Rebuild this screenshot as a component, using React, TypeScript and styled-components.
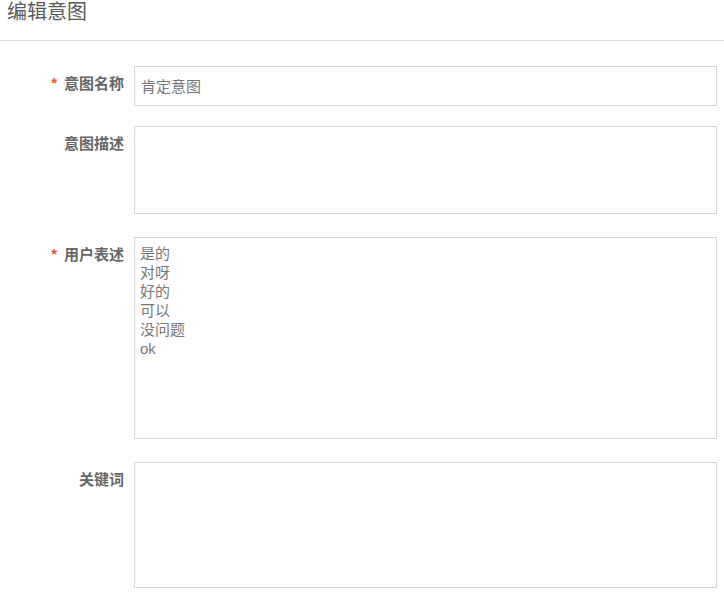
import React from "react";
import styled, { createGlobalStyle } from "styled-components";

const Global = createGlobalStyle`
  html, body { margin: 0; padding: 0; background: #fff; }
  body { font-family: "Liberation Sans", "Noto Sans CJK SC", sans-serif; }
  * { box-sizing: border-box; }
`;

const Page = styled.div`
  width: 724px;
  min-height: 603px;
  background: #fff;
`;

const Header = styled.header`
  height: 41px;
  border-bottom: 1px solid #dddddd;
  padding-left: 7px;
`;

const Title = styled.h1`
  margin: 0;
  font-size: 20px;
  line-height: 25px;
  font-weight: normal;
  color: #5a5a5a;
`;

const Form = styled.form`
  padding: 25px 7px 0 0;
  display: flex;
  flex-direction: column;
`;

const Row = styled.div<{ $gap: number }>`
  display: grid;
  grid-template-columns: 124px 583px;
  column-gap: 10px;
  margin-bottom: ${(p) => p.$gap}px;
`;

const Label = styled.label`
  display: flex;
  justify-content: flex-end;
  align-items: center;
  height: 20px;
  margin-top: 6px;
  font-size: 15px;
  font-weight: bold;
  color: #666;
  white-space: nowrap;
`;

const Star = styled.span`
  color: #e8562f;
  margin-right: 7px;
  font-size: 15px;
  font-weight: bold;
`;

const Input = styled.input`
  width: 583px;
  height: 40px;
  border: 1px solid #d6d6d6;
  border-radius: 0;
  padding: 0 6px 2px;
  font-family: "Liberation Sans", "Noto Sans CJK SC", sans-serif;
  font-size: 15px;
  color: #777;
  outline: none;
`;

const Area = styled.textarea<{ $h: number }>`
  display: block;
  width: 583px;
  height: ${(p) => p.$h}px;
  border: 1px solid #d6d6d6;
  border-radius: 0;
  padding: 6px 5px;
  font-family: "Liberation Sans", "Noto Sans CJK SC", sans-serif;
  font-size: 15px;
  line-height: 19px;
  color: #777;
  resize: none;
  outline: none;
`;

export default function App() {
  return (
    <Page>
      <Global />
      <Header>
        <Title>编辑意图</Title>
      </Header>
      <Form>
        <Row $gap={20}>
          <Label>
            <Star>*</Star>意图名称
          </Label>
          <Input defaultValue="肯定意图" />
        </Row>
        <Row $gap={23}>
          <Label>意图描述</Label>
          <Area $h={88} defaultValue="" />
        </Row>
        <Row $gap={23}>
          <Label>
            <Star>*</Star>用户表述
          </Label>
          <Area $h={202} defaultValue={"是的\n对呀\n好的\n可以\n没问题\nok"} />
        </Row>
        <Row $gap={0}>
          <Label>关键词</Label>
          <Area $h={126} defaultValue="" />
        </Row>
      </Form>
    </Page>
  );
}
